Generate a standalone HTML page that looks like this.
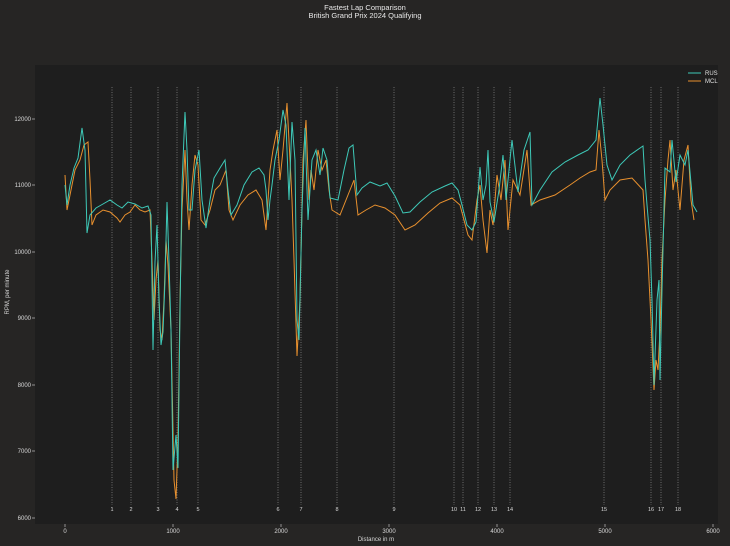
<!DOCTYPE html>
<html><head><style>
html,body{margin:0;padding:0;background:#262524;}
svg{display:block;font-family:"Liberation Sans","DejaVu Sans",sans-serif;}
</style></head><body>
<svg width="730" height="546" viewBox="0 0 730 546">
<rect width="730" height="546" fill="#262524"/>
<text x="365" y="10" fill="#e8e8e8" font-size="7.5" text-anchor="middle">Fastest Lap Comparison</text>
<text x="365" y="18" fill="#e8e8e8" font-size="7.5" text-anchor="middle">British Grand Prix 2024 Qualifying</text>
<rect x="35" y="65" width="683" height="459" fill="#1e1e1e"/>
<g stroke="#d8d8d8" stroke-width="0.6" stroke-dasharray="1,1.5" opacity="0.7">
<line x1="112" y1="87" x2="112" y2="505"/><line x1="131" y1="87" x2="131" y2="505"/>
<line x1="158" y1="87" x2="158" y2="505"/><line x1="177" y1="87" x2="177" y2="505"/>
<line x1="198" y1="87" x2="198" y2="505"/><line x1="278" y1="87" x2="278" y2="505"/>
<line x1="301" y1="87" x2="301" y2="505"/><line x1="337" y1="87" x2="337" y2="505"/>
<line x1="394" y1="87" x2="394" y2="505"/><line x1="454" y1="87" x2="454" y2="505"/>
<line x1="463" y1="87" x2="463" y2="505"/><line x1="478" y1="87" x2="478" y2="505"/>
<line x1="494" y1="87" x2="494" y2="505"/><line x1="510" y1="87" x2="510" y2="505"/>
<line x1="604" y1="87" x2="604" y2="505"/><line x1="651" y1="87" x2="651" y2="505"/>
<line x1="661" y1="87" x2="661" y2="505"/><line x1="678" y1="87" x2="678" y2="505"/>
</g>
<g fill="#d8d8d8" font-size="5.5" text-anchor="middle">
<text x="112" y="511">1</text><text x="131" y="511">2</text><text x="158" y="511">3</text><text x="177" y="511">4</text><text x="198" y="511">5</text><text x="278" y="511">6</text><text x="301" y="511">7</text><text x="337" y="511">8</text><text x="394" y="511">9</text><text x="454" y="511">10</text><text x="463" y="511">11</text><text x="478" y="511">12</text><text x="494" y="511">13</text><text x="510" y="511">14</text><text x="604" y="511">15</text><text x="651" y="511">16</text><text x="661" y="511">17</text><text x="678" y="511">18</text>
</g>
<polyline fill="none" stroke="#e8902e" stroke-width="1" points="65,175 67,210 70,195 75,170 80,160 84,145 88,142 90,180 92,225 96,215 103,210 110,212 117,218 120,222 125,215 130,212 135,205 140,210 145,212 150,210 152,260 154,320 156,280 158,260 160,330 162,340 164,300 166,240 168,265 171,330 174,480 176,499 178,440 180,300 182,210 185,150 187,200 189,230 192,185 195,155 198,165 201,220 205,225 210,210 215,190 220,185 226,170 229,210 233,220 240,205 248,195 256,190 262,200 266,230 268,200 270,170 273,150 277,130 280,180 283,150 287,103 290,160 292,200 294,260 297,356 300,300 303,160 306,120 309,200 311,170 314,190 318,150 322,170 326,160 329,190 332,210 340,215 348,195 354,180 358,215 366,210 375,205 385,208 395,215 405,230 415,225 428,213 440,203 452,198 460,205 468,235 472,240 477,200 480,185 483,220 487,253 490,210 493,225 497,175 501,200 505,160 508,230 513,180 520,195 527,150 531,205 540,200 555,195 570,185 580,178 590,172 596,170 599,130 602,160 605,200 610,190 620,180 632,178 643,190 645,220 648,260 651,320 654,390 656,360 658,370 660,330 662,260 665,200 668,160 670,140 673,190 676,170 680,210 684,160 688,145 691,200 694,220"/>
<polyline fill="none" stroke="#3ec9b8" stroke-width="1" points="65,185 67,205 70,185 74,168 78,158 82,128 85,150 87,233 90,215 96,208 103,204 110,200 117,205 122,208 128,202 135,204 142,208 148,206 151,215 153,350 155,262 157,225 159,300 161,345 163,332 165,280 167,202 169,262 171,330 173,470 176,435 178,468 180,310 182,185 185,112 187,150 189,210 192,210 195,170 199,150 202,200 206,228 210,200 214,178 220,168 225,160 228,190 231,215 237,205 244,185 252,172 259,168 264,175 266,190 268,220 270,200 272,185 275,160 279,140 283,110 286,125 289,200 292,122 295,160 297,320 299,340 302,210 305,128 308,220 312,160 316,150 320,175 323,148 327,160 330,198 338,200 344,170 349,148 353,145 357,195 362,188 370,182 380,186 387,183 395,196 403,213 410,212 420,202 432,192 445,186 452,183 458,190 462,205 467,225 472,230 476,222 480,167 483,200 486,185 488,150 490,202 494,222 499,190 503,155 506,200 512,140 518,192 524,150 530,132 532,205 540,190 552,172 565,162 578,155 588,150 596,140 600,98 603,125 607,165 612,180 620,165 630,155 643,146 645,180 647,205 650,240 652,300 654,385 657,300 659,280 660,380 662,290 665,168 670,172 672,140 676,182 680,155 685,165 688,150 693,205 697,212"/>
<line x1="688" y1="73" x2="701" y2="73" stroke="#3ec9b8" stroke-width="1"/>
<line x1="688" y1="81" x2="701" y2="81" stroke="#e8902e" stroke-width="1"/>
<text x="705" y="75" fill="#e0e0e0" font-size="6">RUS</text>
<text x="705" y="83" fill="#e0e0e0" font-size="6">MCL</text>
<g fill="#d8d8d8" font-size="6" text-anchor="end">
<text x="31" y="121">12000</text><text x="31" y="187">11000</text><text x="31" y="254">10000</text><text x="31" y="320">9000</text><text x="31" y="387">8000</text><text x="31" y="453">7000</text><text x="31" y="520">6000</text>
</g>
<g stroke="#d8d8d8" stroke-width="0.6">
<line x1="32" y1="119" x2="35" y2="119"/><line x1="32" y1="185" x2="35" y2="185"/><line x1="32" y1="252" x2="35" y2="252"/><line x1="32" y1="318" x2="35" y2="318"/><line x1="32" y1="385" x2="35" y2="385"/><line x1="32" y1="451" x2="35" y2="451"/><line x1="32" y1="518" x2="35" y2="518"/>
<line x1="65" y1="524" x2="65" y2="527"/><line x1="173" y1="524" x2="173" y2="527"/><line x1="281" y1="524" x2="281" y2="527"/><line x1="389" y1="524" x2="389" y2="527"/><line x1="497" y1="524" x2="497" y2="527"/><line x1="605" y1="524" x2="605" y2="527"/><line x1="713" y1="524" x2="713" y2="527"/>
</g>
<g fill="#d8d8d8" font-size="6" text-anchor="middle">
<text x="65" y="533">0</text><text x="173" y="533">1000</text><text x="281" y="533">2000</text><text x="389" y="533">3000</text><text x="497" y="533">4000</text><text x="605" y="533">5000</text><text x="713" y="533">6000</text>
<text x="376" y="541">Distance in m</text>
<text x="0" y="0" transform="translate(9,292) rotate(-90)">RPM, per minute</text>
</g>
</svg>
</body></html>
